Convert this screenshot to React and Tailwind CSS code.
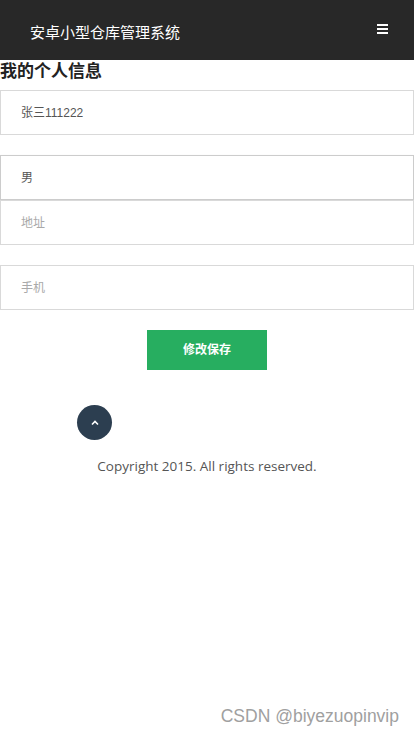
const cjk = { fontFamily: '"Liberation Sans", "Noto Sans CJK SC", sans-serif' };

function Field({ value, placeholder, dark }) {
  return (
    <div
      className={`h-[45px] w-full border bg-white px-[20px] flex items-center text-[12px] ${
        dark ? "border-[#cccccc] shadow-[0_1px_2px_rgba(0,0,0,0.12)]" : "border-[#d9d9d9]"
      }`}
    >
      {value ? (
        <span className="text-[#555555]">{value}</span>
      ) : (
        <span className="text-[#a9a9a9]">{placeholder}</span>
      )}
    </div>
  );
}

export default function App() {
  return (
    <div className="relative min-h-[736px] w-[414px] bg-white" style={cjk}>
      <header className="h-[60px] bg-[#282828] flex items-center justify-between pl-[30px] pr-[26px]">
        <h1 className="text-white text-[15px] leading-none pt-[4px]">安卓小型仓库管理系统</h1>
        <div className="flex flex-col gap-[2px] mb-[2px]">
          <span className="block w-[11px] h-[2px] bg-white" />
          <span className="block w-[11px] h-[2px] bg-white" />
          <span className="block w-[11px] h-[2px] bg-white" />
        </div>
      </header>

      <h2 className="text-[17px] font-bold text-[#222222] leading-[22px] pt-[1px] h-[30px]">
        我的个人信息
      </h2>

      <Field value="张三111222" />
      <div className="h-[20px]" />
      <Field value="男" dark />
      <Field placeholder="地址" />
      <div className="h-[20px]" />
      <Field placeholder="手机" />

      <div className="flex justify-center pt-[20px]">
        <button className="w-[120px] h-[40px] bg-[#27ae60] text-white text-[12px] font-bold">
          修改保存
        </button>
      </div>

      <div className="pl-[77px] pt-[35px]">
        <div className="w-[35px] h-[35px] rounded-full bg-[#2c3e50] flex items-center justify-center">
          <svg width="8" height="6" viewBox="0 0 8 6" fill="none">
            <path d="M1 4.5 L4 1.5 L7 4.5" stroke="white" strokeWidth="1.6" />
          </svg>
        </div>
      </div>

      <p
        className="text-center text-[13.5px] text-[#555555] pt-[16px]"
        style={{ fontFamily: '"Open Sans", sans-serif' }}
      >
        Copyright 2015. All rights reserved.
      </p>

      <div
        className="absolute right-[15px] bottom-[7px] text-[17.5px] text-[#a0a0a0]"
        style={{ fontFamily: '"Liberation Sans", Arial, sans-serif' }}
      >
        CSDN @biyezuopinvip
      </div>
    </div>
  );
}
